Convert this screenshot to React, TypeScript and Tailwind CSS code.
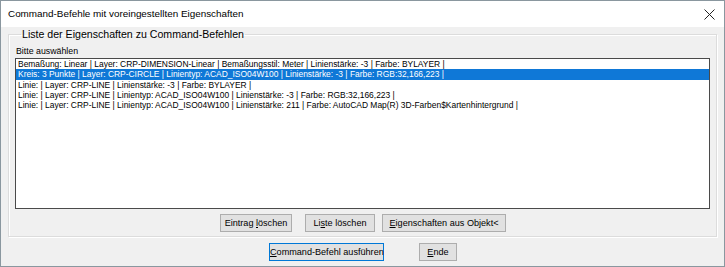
import React from "react";

const rows = [
  "Bemaßung: Linear | Layer: CRP-DIMENSION-Linear | Bemaßungsstil: Meter | Linienstärke: -3 | Farbe: BYLAYER |",
  "Kreis: 3 Punkte | Layer: CRP-CIRCLE | Linientyp: ACAD_ISO04W100 | Linienstärke: -3 | Farbe: RGB:32,166,223 |",
  "Linie: | Layer: CRP-LINE | Linienstärke: -3 | Farbe: BYLAYER |",
  "Linie: | Layer: CRP-LINE | Linientyp: ACAD_ISO04W100 | Linienstärke: -3 | Farbe: RGB:32,166,223 |",
  "Linie: | Layer: CRP-LINE | Linientyp: ACAD_ISO04W100 | Linienstärke: 211 | Farbe: AutoCAD Map(R) 3D-Farben$Kartenhintergrund |",
];

function Btn({ children, w, def }: { children: React.ReactNode; w: number; def?: boolean }) {
  return (
    <button
      style={{ width: w }}
      className={
        "h-[18px] bg-[#e1e1e1] text-[9.1px] text-black leading-[16px] whitespace-nowrap text-center p-0 " +
        (def ? "border border-[#0078d7]" : "border border-[#adadad]")
      }
    >
      <span>{children}</span>
    </button>
  );
}

export default function App() {
  return (
    <div
      className="w-[725px] h-[267px] bg-[#f0f0f0] border border-[#8a979f] flex flex-col overflow-hidden"
      style={{ fontFamily: '"Liberation Sans", Arial, sans-serif' }}
    >
      <div className="h-[26px] bg-white flex items-center pl-[7px] pr-[8px] shrink-0">
        <span className="text-[9.9px] text-black">Command-Befehle mit voreingestellten Eigenschaften</span>
        <div className="flex-1" />
        <svg width="11" height="11" viewBox="0 0 11 11" className="mr-[1px]">
          <path d="M0.5 0.5 L10.5 10.5 M10.5 0.5 L0.5 10.5" stroke="#222" strokeWidth="1" />
        </svg>
      </div>
      <div className="flex-1 flex flex-col px-[7px] pt-[1px]">
        <fieldset className="border border-[#dcdcdc] shadow-[inset_1px_1px_0_#fff,1px_1px_0_#fff] h-[209px] flex flex-col items-stretch px-[6px]">
          <legend className="ml-[6px] px-[1px] text-[10.6px] text-black leading-[12px]">
            Liste der Eigenschaften zu Command-Befehlen
          </legend>
          <div className="text-[8.8px] text-black leading-[12px] mt-[5px] ml-[1px]">Bitte auswählen</div>
          <div className="h-[151px] bg-white border border-[#4a4a4a] mt-[1px] flex flex-col pt-[0px]">
            {rows.map((r, i) => (
              <div
                key={i}
                className={
                  "h-[10.3px] leading-[10.3px] text-[8.45px] pl-[2px] whitespace-nowrap " +
                  (i === 1 ? "bg-[#0f78d7] text-white" : "text-black")
                }
              >
                {r}
              </div>
            ))}
          </div>
          <div className="flex justify-center mt-[5px] pl-[1px]">
            <Btn w={72}>
              Eintrag <u>l</u>öschen
            </Btn>
            <div className="w-[13px]" />
            <Btn w={70}>
              Li<u>s</u>te löschen
            </Btn>
            <div className="w-[7px]" />
            <Btn w={124}>
              <u>E</u>igenschaften aus Objekt&lt;
            </Btn>
          </div>
        </fieldset>
        <div className="flex justify-center mt-[6px] pl-[1px]">
          <Btn w={115} def>
            <u>C</u>ommand-Befehl ausführen
          </Btn>
          <div className="w-[35px]" />
          <Btn w={38}>
            <u>E</u>nde
          </Btn>
        </div>
      </div>
    </div>
  );
}
